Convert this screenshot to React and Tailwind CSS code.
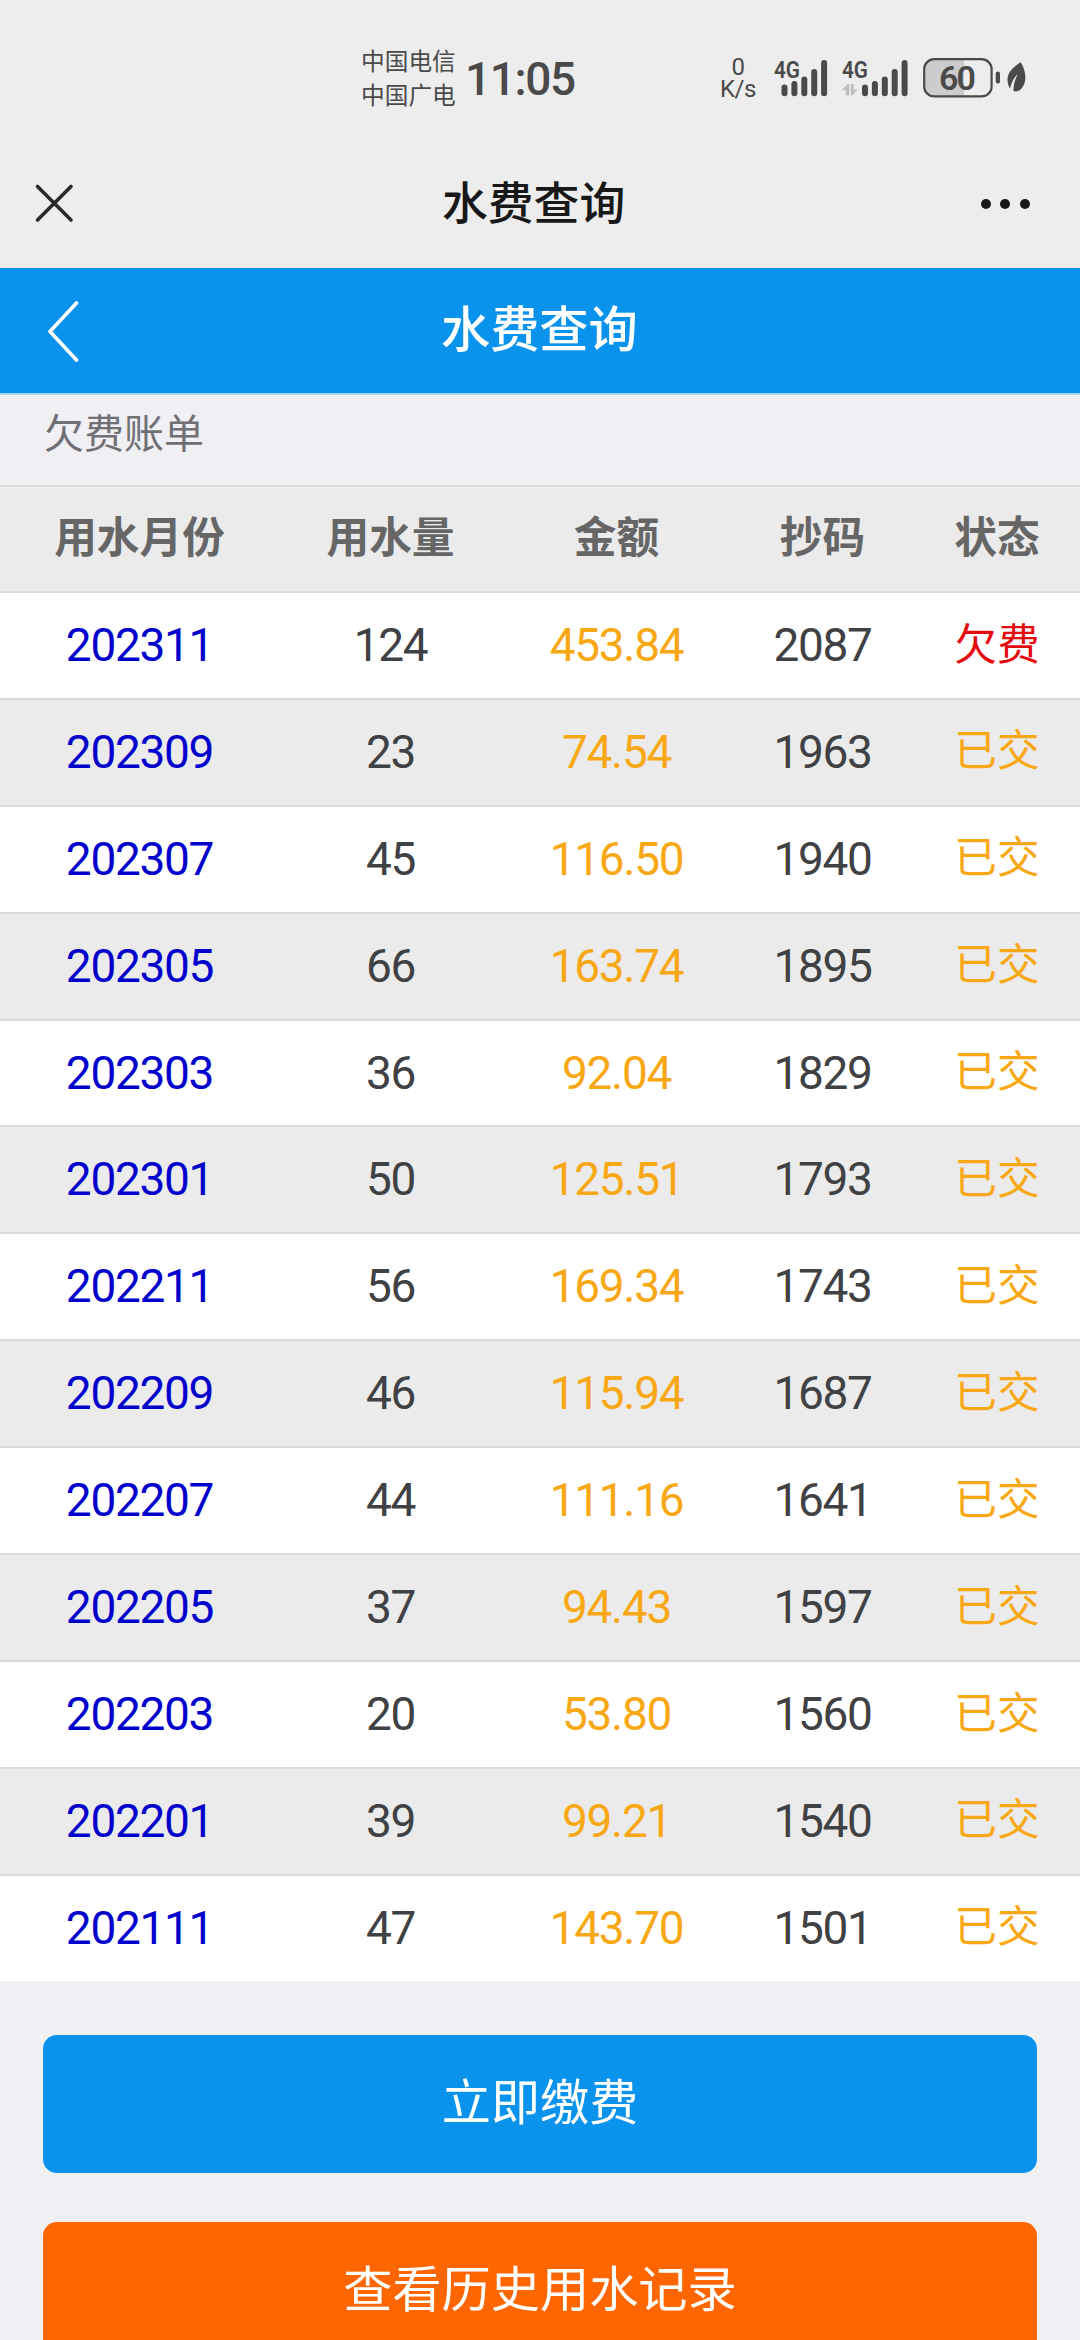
import React from 'react';

const bills = [
  { month: '202311', usage: 124, amount: '453.84', reading: 2087, paid: false },
  { month: '202309', usage: 23, amount: '74.54', reading: 1963, paid: true },
  { month: '202307', usage: 45, amount: '116.50', reading: 1940, paid: true },
  { month: '202305', usage: 66, amount: '163.74', reading: 1895, paid: true },
  { month: '202303', usage: 36, amount: '92.04', reading: 1829, paid: true },
  { month: '202301', usage: 50, amount: '125.51', reading: 1793, paid: true },
  { month: '202211', usage: 56, amount: '169.34', reading: 1743, paid: true },
  { month: '202209', usage: 46, amount: '115.94', reading: 1687, paid: true },
  { month: '202207', usage: 44, amount: '111.16', reading: 1641, paid: true },
  { month: '202205', usage: 37, amount: '94.43', reading: 1597, paid: true },
  { month: '202203', usage: 20, amount: '53.80', reading: 1560, paid: true },
  { month: '202201', usage: 39, amount: '99.21', reading: 1540, paid: true },
  { month: '202111', usage: 47, amount: '143.70', reading: 1501, paid: true },
];

const columns = 'grid grid-cols-[279px_223px_229px_183px_166px] items-center text-center';

// Signal bars, the second SIM also shows the faded data arrows
function Signal({ offset, arrows }) {
  const tops = [24.5, 21, 16.5, 9, 0];
  return (
    <svg width={offset + 46} height="37" viewBox={`0 0 ${offset + 46} 37`} className="shrink-0 overflow-visible" fill="#4a4a4a">
      <text x="0" y="17.5" fontSize="24.5" fontWeight="600" textLength="26" lengthAdjust="spacingAndGlyphs">4G</text>
      {tops.map((top, i) => (
        <rect key={top} x={offset + i * 9.9} y={top} width="6" height={36.2 - top} rx="3" />
      ))}
      {arrows && (
        <path d="M0 30L5.5 24H7.3V35.500H3.8V30ZM9 24H11.5V29.5H15.5L10.5 35.500H9Z" fill="#bdbdbd" />
      )}
    </svg>
  );
}

function Battery() {
  return (
    <svg width="78" height="40" viewBox="0 0 78 40" className="shrink-0">
      <path d="M11 2H41V38H11Q2 38 2 29V11Q2 2 11 2Z" fill="#cccccc" />
      <rect x="1.2" y="1.2" width="67.4" height="37.2" rx="10" fill="none" stroke="#4a4a4a" strokeWidth="2.2" />
      <rect x="72.7" y="13.5" width="4.3" height="12" rx="2.1" fill="#4a4a4a" />
      <text x="34.5" y="31.5" fontSize="34" fontWeight="600" textAnchor="middle" textLength="37" fill="#4a4a4a">60</text>
    </svg>
  );
}

function StatusBar() {
  return (
    <div className="flex h-[142px] items-start text-[#4a4a4a]">
      <div className="ml-[361px] mt-[45px] w-[96px] text-[23.7px] leading-[34px] whitespace-nowrap">
        <div>中国电信</div>
        <div>中国广电</div>
      </div>
      <div className="ml-[8px] mt-[55px] w-[111px] text-[46px] leading-[48px] font-medium tracking-[-1.4px]">11:05</div>
      <div className="ml-[142px] mt-[56px] w-[40px] text-center text-[24px] leading-[22px] tracking-[-0.5px]">
        <div>0</div>
        <div>K/s</div>
      </div>
      <div className="mt-[60px] ml-[16px] flex">
        <Signal offset={7.5} />
        <div className="w-[14.5px]" />
        <Signal offset={20} arrows />
      </div>
      <div className="mt-[58px] ml-[14.5px]">
        <Battery />
      </div>
      <svg width="20" height="30" viewBox="0 0 20 30" className="mt-[62px] ml-[6px]" fill="#4a4a4a">
        <path d="M13.500 0C9.500 3.500 1 8 .5 17C.4 20.500 1.300 24 3 26.500C4.500 20 7 15.500 11 12C8 17.500 6.500 22 6.500 29C10 30.500 14 28.500 16.500 23.500C20.500 15.500 17.500 6 13.500 0Z" />
      </svg>
    </div>
  );
}

function TitleBar() {
  return (
    <div className="flex h-[126px] items-center">
      <svg width="40" height="40" viewBox="0 0 40 40" className="ml-[34px] -mt-[4px]" stroke="#2a2a2a" strokeWidth="3.6" strokeLinecap="round">
        <path d="M3.500 3.500L37 37M37 3.500L3.500 37" />
      </svg>
      <h1 className="ml-[368px] w-[186px] text-[45.8px] leading-none font-medium whitespace-nowrap text-[#181818]">水费查询</h1>
      <div className="ml-[353px] -mt-[3px] flex gap-[9.4px]">
        <span className="size-[10px] rounded-full bg-[#181818]" />
        <span className="size-[10px] rounded-full bg-[#181818]" />
        <span className="size-[10px] rounded-full bg-[#181818]" />
      </div>
    </div>
  );
}

function BillTable() {
  return (
    <div className="h-[1496px] overflow-hidden border-t-2 border-[#dcdcdc] bg-white">
      <div className={`${columns} h-[106px] border-b-2 border-[#dcdcdc] bg-[#ebebeb] pb-px text-[42.7px] leading-none font-bold text-[#666666]`}>
        <div>用水月份</div>
        <div>用水量</div>
        <div>金额</div>
        <div>抄码</div>
        <div>状态</div>
      </div>
      {bills.map((bill) => (
        <div
          key={bill.month}
          className={`${columns} h-[106.9px] border-b-2 border-[#dcdcdc] pb-px text-[46px] leading-none tracking-[-1.3px] text-[#404144] last:border-b-0 last:pb-[3px] odd:bg-[#ebebeb]`}
        >
          <div className="text-[#0000cc]">{bill.month}</div>
          <div>{bill.usage}</div>
          <div className="text-[#f9a815]">{bill.amount}</div>
          <div>{bill.reading}</div>
          <div className={bill.paid ? 'text-[42.7px] tracking-normal text-[#f9a815]' : 'text-[42.7px] tracking-normal text-[#e60a0f]'}>
            {bill.paid ? '已交' : '欠费'}
          </div>
        </div>
      ))}
    </div>
  );
}

export default function App() {
  return (
    <div className="h-[2340px] w-[1080px] overflow-hidden bg-[#efeff4] font-[Roboto,'Noto_Sans_CJK_SC',sans-serif]">
      <div className="bg-[#ededed]">
        <StatusBar />
        <TitleBar />
      </div>

      {/* Page header */}
      <div className="flex h-[127px] items-center border-b-2 border-[#a9d6f5] bg-[#0993ed]">
        <svg width="34" height="62" viewBox="0 0 34 62" className="ml-[46px]" fill="none" stroke="#ffffff" strokeWidth="3.6" strokeLinecap="round" strokeLinejoin="round">
          <path d="M30.500 3L4 31.500L30.500 60" />
        </svg>
        <h2 className="ml-[361px] w-[200px] text-[49.2px] leading-none font-medium whitespace-nowrap text-white">水费查询</h2>
      </div>

      <div className="flex h-[90px] items-center pb-[11px] pl-[44px] text-[40px] leading-none text-[#707074]">欠费账单</div>

      <BillTable />

      <div className="flex flex-col gap-[49px] px-[43px] pt-[54px]">
        <button className="h-[138px] rounded-[14px] bg-[#0993ed] text-[49.2px] leading-none text-white">立即缴费</button>
        <button className="h-[138px] rounded-[14px] bg-[#ff6600] text-[49.2px] leading-none text-white">查看历史用水记录</button>
      </div>
    </div>
  );
}
